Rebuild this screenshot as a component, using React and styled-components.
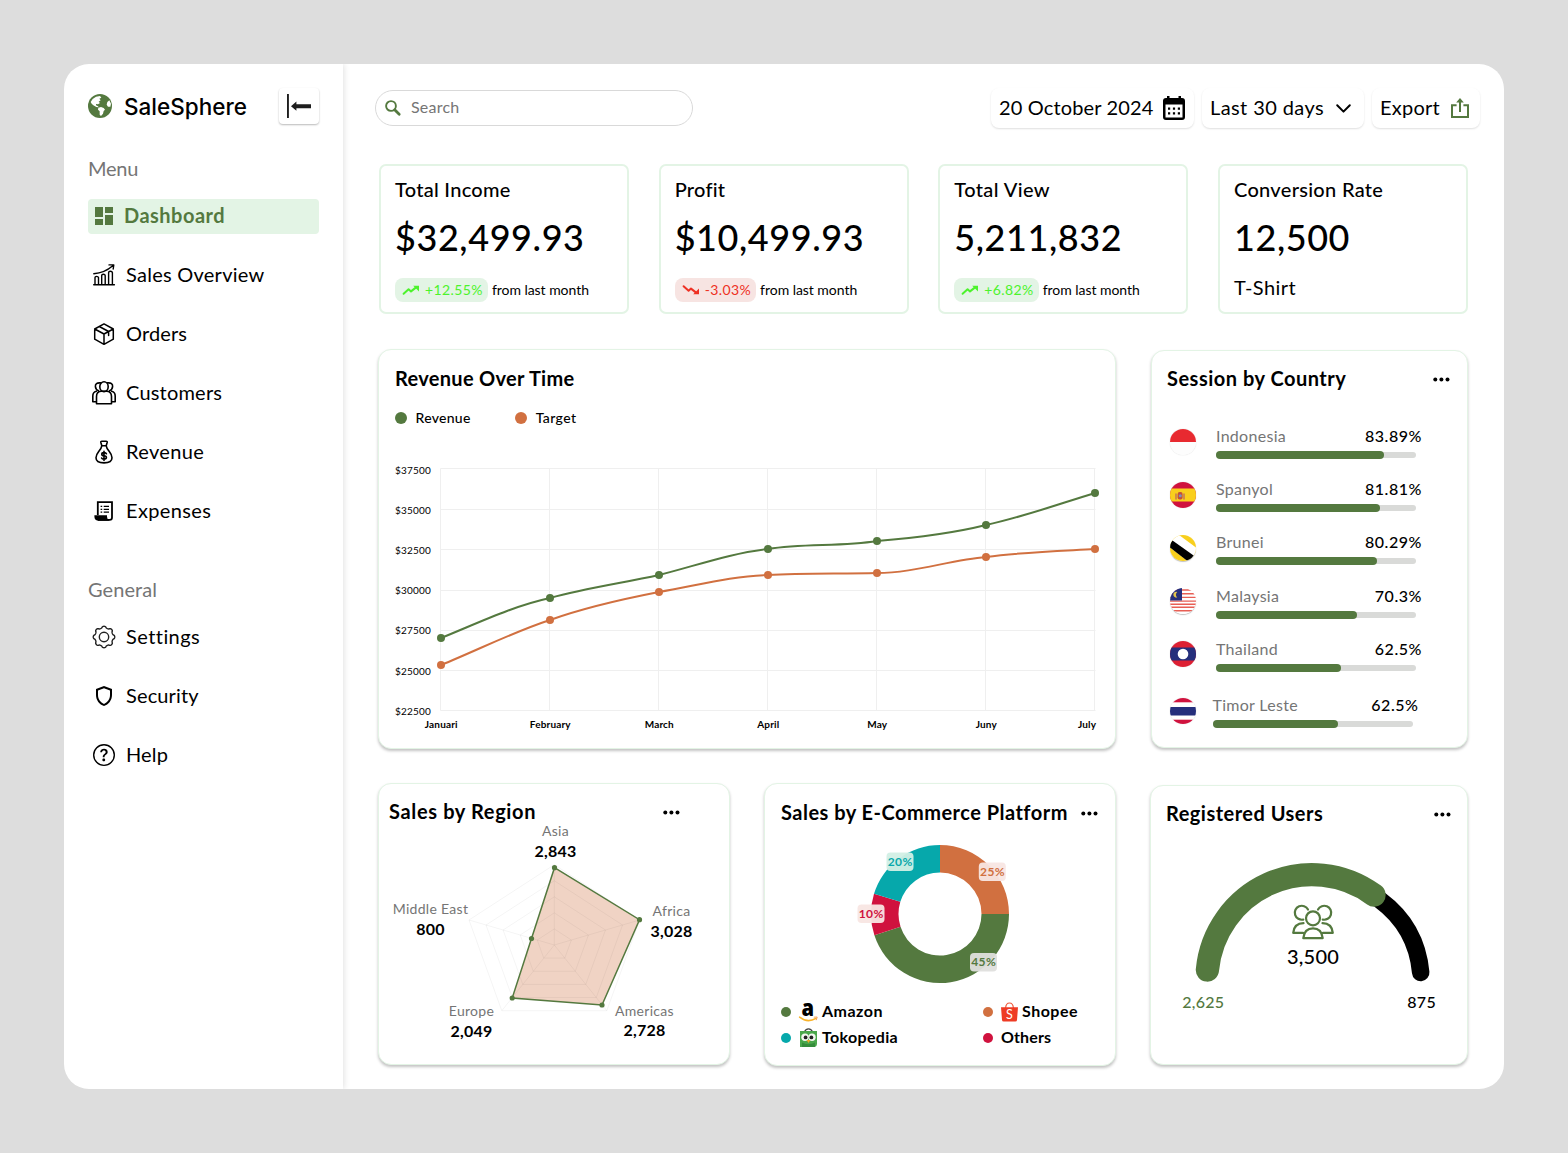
import React from 'react';
import styled, { createGlobalStyle, css } from 'styled-components';
import { BsQuestionCircle } from 'react-icons/bs';
import { MdDashboard, MdOutlineShield } from 'react-icons/md';

const GREEN = '#54793f';
const ORANGE = '#d17040';
const TEAL = '#06a8ab';
const RED = '#d0123e';
const MINT = '#e3f4e5';
const GRAY = '#757575';

const GlobalStyle = createGlobalStyle`
  *, *::before, *::after { box-sizing: border-box; }
  body {
    margin: 0;
    background: #dddddd;
    color: #000;
    font-family: Lato, "Open Sans", sans-serif;
    letter-spacing: 0.015em;
  }
  button { font: inherit; letter-spacing: inherit; color: inherit; border: 0; padding: 0; background: none; }
  svg { display: block; flex: none; overflow: visible; }
  svg text { font-family: Lato, "Open Sans", sans-serif; }
`;

const tracking = css`letter-spacing: ${p => p.$ls ?? 0.015}em;`;

/* ---------- shell ---------- */
const Page = styled.div`
  padding: 64px;
  min-height: 1153px;
`;
const Window = styled.div`
  display: flex;
  width: 1440px;
  height: 1025px;
  border-radius: 25px;
  background: #fff;
  overflow: hidden;
`;
const Sidebar = styled.aside`
  width: 279px;
  padding: 24px 24px 0;
  box-shadow: 1px 0 6px rgba(0, 0, 0, 0.12);
`;
const Brand = styled.div`
  display: flex;
  align-items: center;
  height: 36px;
`;
const BrandName = styled.span`
  flex: 1;
  margin-left: 12px;
  font: 500 22.5px/36px Inter, sans-serif;
  letter-spacing: 0;
  padding-top: 2px;
`;
const Collapse = styled.button`
  width: 40px;
  height: 36px;
  border-radius: 4px;
  display: grid;
  place-items: center;
  box-shadow: 0 1px 2px rgba(0, 0, 0, 0.28);
`;
const NavLabel = styled.div`
  margin-top: ${p => p.$top}px;
  padding-bottom: 2px;
  font-size: 20px;
  line-height: 22px;
  color: ${GRAY};
  ${tracking}
`;
const Nav = styled.nav`
  display: flex;
  flex-direction: column;
  gap: 24px;
  margin-top: ${p => p.$top}px;
`;
const NavItem = styled.a`
  display: flex;
  align-items: center;
  height: 35px;
  padding-left: 4px;
  padding-bottom: ${p => p.$raise}px;
  gap: ${p => (p.$active ? 8 : 10)}px;
  border-radius: 4px;
  font-size: 20px;
  line-height: 33px;
  font-weight: ${p => (p.$active ? 700 : 400)};
  color: ${p => (p.$active ? GREEN : '#000')};
  background: ${p => (p.$active ? MINT : 'transparent')};
  ${tracking}
`;
const NavIcon = styled.span`
  width: 24px;
  height: 24px;
  display: grid;
  place-items: center;
`;
const Label = styled.span`
  padding-bottom: ${p => p.$pb ?? 2}px;
`;

/* ---------- main ---------- */
const Main = styled.main`
  flex: 1;
  padding: 24px 24px 0 32px;
`;
const TopBar = styled.header`
  display: flex;
  align-items: center;
  gap: 8px;
  height: 40px;
`;
const SearchBox = styled.div`
  display: flex;
  align-items: center;
  gap: 10px;
  width: 318px;
  height: 36px;
  margin-right: auto;
  margin-top: -1px;
  padding-left: 9px;
  border: 1px solid #d9d9d9;
  border-radius: 18px;
  font-size: 16px;
  color: ${GRAY};
`;
const Action = styled.button`
  display: flex;
  align-items: center;
  justify-content: space-between;
  width: ${p => p.$w}px;
  height: 40px;
  padding: 0 ${p => p.$pr}px 0 8px;
  border-radius: 8px;
  font-size: 20px;
  box-shadow: 0 1px 2px rgba(0, 0, 0, 0.13);
  ${tracking}
`;
const Stats = styled.section`
  display: flex;
  justify-content: space-between;
  margin: 36px 12px 0 4px;
`;
const StatCard = styled.article`
  width: 250px;
  height: 150px;
  padding: 12px 14px;
  border: 2px solid ${MINT};
  border-radius: 7px;
`;
const StatTitle = styled.h3`
  margin: 0;
  padding-bottom: 2px;
  font-size: 20px;
  font-weight: 500;
  line-height: 22px;
  ${tracking}
`;
const StatValue = styled.div`
  margin-top: 13px;
  font-size: 36px;
  font-weight: 500;
  line-height: 44px;
  letter-spacing: 0.016em;
`;
const StatFoot = styled.div`
  display: flex;
  align-items: center;
  gap: 4px;
  margin-top: 19px;
  height: 24px;
  font-size: 14px;
  letter-spacing: -0.003em;
`;
const Badge = styled.span`
  display: flex;
  align-items: center;
  gap: 6px;
  height: 24px;
  padding: 0 5px 0 8px;
  border-radius: 8px;
  letter-spacing: 0.028em;
  color: ${p => (p.$down ? '#ee3124' : '#4cf32c')};
  background: ${p => (p.$down ? '#f7e4e2' : MINT)};
`;
const StatNote = styled.div`
  margin-top: 16px;
  font-size: 20px;
  line-height: 24px;
  letter-spacing: 0.021em;
`;

const Row = styled.section`
  display: flex;
  align-items: flex-start;
  justify-content: space-between;
  margin: ${p => p.$top}px 12px 0 3px;
`;
const Card = styled.article`
  width: ${p => p.$w}px;
  height: ${p => p.$h}px;
  margin-top: ${p => p.$mt || 0}px;
  padding: ${p => p.$pad};
  border: 1px solid ${MINT};
  border-radius: 13px;
  background: #fff;
  box-shadow: 0 2px 3px rgba(0, 0, 0, 0.24);
`;
const CardHead = styled.div`
  display: flex;
  align-items: center;
  justify-content: space-between;
  height: 24px;
`;
const CardTitle = styled.h2`
  margin: 0;
  padding-bottom: 2px;
  font-size: 20px;
  font-weight: 700;
  line-height: 22px;
  white-space: nowrap;
  ${tracking}
`;
const Legend = styled.div`
  display: flex;
  gap: 44.5px;
  margin: 17px 0 26px;
`;
const LegendItem = styled.div`
  display: flex;
  align-items: center;
  gap: 8.5px;
  font-size: 14px;
  font-weight: 500;
  line-height: 20px;
  ${tracking}
`;
const Dot = styled.span`
  width: ${p => p.$s}px;
  height: ${p => p.$s}px;
  border-radius: 50%;
  background: ${p => p.$c};
`;

/* ---------- session list ---------- */
const Countries = styled.div`
  display: grid;
  grid-auto-rows: 35px;
  row-gap: 18.2px;
  margin-top: 33px;
`;
const Country = styled.div`
  display: flex;
  align-items: center;
  gap: ${p => (p.$last ? 16.5 : 20)}px;
  padding-left: 3px;
  margin-top: ${p => (p.$last ? 7 : 0)}px;
`;
const CountryBody = styled.div`
  width: 206px;
`;
const CountryTop = styled.div`
  display: flex;
  justify-content: space-between;
  font-size: 16px;
  line-height: 21px;
`;
const CountryName = styled.span`
  color: ${GRAY};
  letter-spacing: 0.018em;
`;
const Share = styled.span`
  font-weight: 500;
  letter-spacing: 0.034em;
`;
const Track = styled.div`
  display: flex;
  align-items: center;
  width: 200px;
  height: 6px;
  margin-top: 6px;
  border-radius: 3px;
  background: #d9dad8;
`;
const Fill = styled.div`
  height: 8px;
  border-radius: 4px;
  background: ${GREEN};
`;
const FlagDisc = styled.span`
  display: block;
  width: 26px;
  height: 26px;
  border-radius: 50%;
  overflow: hidden;
  box-shadow: 0 ${p => (p.$raised ? 1 : 0)}px 1px rgba(0, 0, 0, 0.25);
`;

/* ---------- platform legend ---------- */
const Platforms = styled.div`
  display: grid;
  grid-template-columns: 202px auto;
  grid-auto-rows: 26px;
`;
const Platform = styled.div`
  display: flex;
  align-items: center;
  gap: 4px;
  font-size: 16px;
  font-weight: 700;
  ${tracking}
`;
const PlatformDot = styled(Dot)`
  margin-right: 4px;
`;

/* ---------- icons ---------- */
const stroke = { fill: 'none', stroke: 'currentColor', strokeLinecap: 'round', strokeLinejoin: 'round' };

const Globe = () => (
  <svg width="24" height="24" viewBox="0 0 72 72">
    <circle cx="36" cy="36" r="36" fill={GREEN} />
    <path fill="#fff" d="M8 24 14 15 24 8 36 6 40 11 34 14 38 19 32 23 36 27 30 31 24 30 24 34 30 37 32 40 25 39 16 34 11 29ZM31 41 39 39 47 42 51 47 47 51 45 59 39 66 35 62 35 52 30 47ZM58 24 64 19 69 29 67 38 60 38 56 32Z" />
  </svg>
);
const CollapseIcon = () => (
  <svg width="24" height="24" viewBox="0 0 24 24" fill="#1e1e1e">
    <rect x="0" y="0" width="1.9" height="24" />
    <path d="M4 12.2 9.4 7.6V10.2H24V14.2H9.4V16.8Z" />
  </svg>
);
const SalesIcon = () => (
  <svg width="22" height="22" viewBox="0 0 22 22" {...stroke} strokeWidth="1.4">
    <path d="M.7 20.8H21.4M2 20.5V13.5Q2 12.4 3.6 12.4T5.5 13.5V20.5M8.7 20.5V11.5Q8.7 10.2 10.4 10.2T12.2 11.5V20.5M15.6 20.5V8.6Q15.6 7.2 17.4 7.2T19.4 8.6V20.5M.8 9.8Q11.5 9 19.8 1.8M16 .9H20.8L20.2 5" />
  </svg>
);
const BoxIcon = () => (
  <svg width="22" height="22" viewBox="0 0 22 22" {...stroke} strokeWidth="1.5">
    <path d="M11 .9 20.3 6V16.2L11 21.3 1.7 16.2V6ZM1.7 6 11 11 20.3 6M11 11V21.3M6.3 3.5 15.6 8.5V12.5" />
  </svg>
);
const CustomersIcon = () => (
  <svg width="24" height="24" viewBox="0 0 24 24" {...stroke} strokeWidth="1.6">
    <ellipse cx="12" cy="5.7" rx="4.2" ry="4.9" />
    <path d="M4.5 22.8V15.5Q4.5 10.4 9.5 10.3H14.5Q19.5 10.4 19.5 15.5V22.8ZM8.6 1.9Q3 1.3 3.4 5.7 3.8 9 6.5 9.8M4.5 20.8H.8V15Q.8 11.2 4.3 10.3M15.4 1.9Q21 1.3 20.6 5.7 20.2 9 17.5 9.8M19.5 20.8H23.2V15Q23.2 11.2 19.7 10.3" />
  </svg>
);
const BagIcon = () => (
  <svg width="18" height="24" viewBox="0 0 18 24" {...stroke} strokeWidth="1.6">
    <path d="M6.8 5.8 5.8 2.2Q5.6 1.2 6.8 1.2H11.2Q12.4 1.2 12.2 2.2L11.2 5.8ZM6.8 5.8Q6.4 8.4 3.7 11.6 1 15 1 17.8 1 22.9 9 22.9T17 17.8Q17 15 14.3 11.6 11.6 8.4 11.2 5.8M11.4 13.7Q11 12.6 9 12.6 6.8 12.6 6.8 14.2 6.8 15.6 9 15.8 11.4 16 11.4 17.6 11.4 19.2 9 19.2 7 19.2 6.6 18M9 11.2V20.5" />
  </svg>
);
const ReceiptIcon = () => (
  <svg width="20" height="20" viewBox="0 0 20 20" fill="none" stroke="currentColor" strokeWidth="1.6">
    <path d="M3.8 14V1.2H18V16.5Q18 18.9 15.6 18.9H4" strokeWidth="1.8" />
    <path d="M.4 14.2H13V15.8Q13 18.7 15.6 19.7H4Q.4 19.6.4 15.6Z" fill="currentColor" stroke="none" />
    <path d="M6.6 5.4H8.2M9.7 5.4H15M6.6 8.3H8.2M9.7 8.3H15M6.6 11.2H8.2M9.7 11.2H15" strokeWidth="1.3" />
  </svg>
);
const gearPath = (() => {
  const pts = [];
  for (let i = 0; i <= 96; i++) {
    const a = (i / 96) * Math.PI * 2;
    const wave = Math.cos(8 * a);
    const r = 9.9 + 0.85 * Math.sign(wave) * Math.sqrt(Math.abs(wave));
    pts.push(`${(12 + r * Math.sin(a)).toFixed(2)} ${(12 - r * Math.cos(a)).toFixed(2)}`);
  }
  return `M${pts.join('L')}Z`;
})();
const GearIcon = () => (
  <svg width="24" height="24" viewBox="0 0 24 24" {...stroke} stroke="#222" strokeWidth="1.4">
    <path d={gearPath} />
    <circle cx="12" cy="12" r="4.7" />
  </svg>
);
const SearchIcon = () => (
  <svg width="16" height="16" viewBox="0 0 16 16" fill="none" stroke={GREEN} strokeLinecap="round">
    <circle cx="6" cy="6" r="4.9" strokeWidth="1.9" />
    <path d="M9.7 9.8 14.2 14.2" strokeWidth="2.8" />
  </svg>
);
const CalendarIcon = () => (
  <svg width="22" height="24" viewBox="0 0 22 24">
    <path fillRule="evenodd" d="M3 2H4V0H6.5V2H15.5V0H18V2H19Q22 2 22 5V21Q22 24 19 24H3Q0 24 0 21V5Q0 2 3 2ZM2.5 8.5V21.5H19.5V8.5Z" />
    <path d="M5 11.5H7.2V13.7H5ZM9.9 11.5H12.1V13.7H9.9ZM14.8 11.5H17V13.7H14.8ZM5 16.3H7.2V18.5H5ZM9.9 16.3H12.1V18.5H9.9ZM14.8 16.3H17V18.5H14.8Z" />
  </svg>
);
const ChevronIcon = () => (
  <svg width="15" height="9" viewBox="0 0 15 9" {...stroke} strokeWidth="2">
    <path d="M1.2 1.2 7.5 7.6 13.8 1.2" />
  </svg>
);
const ExportIcon = () => (
  <svg width="18" height="20" viewBox="0 0 18 20" fill="none" stroke={GREEN} strokeWidth="2">
    <path d="M5.6 7.2H1V19H17V7.2H12.4M9 14V3" />
    <path d="M9 0 12.8 4.6H5.2Z" fill={GREEN} stroke="none" />
  </svg>
);
const TrendIcon = ({ down }) => (
  <svg width="16" height="10" viewBox="0 0 16 10">
    <g transform={down ? 'matrix(1 0 0 -1 0 10)' : undefined} fill="currentColor">
      <path d="M.6 8.8 5.6 4.3 8 6.4 12.8 2.6" fill="none" stroke="currentColor" strokeWidth="2" strokeLinejoin="round" strokeLinecap="round" />
      <path d="M10.2.7H16V6.4Z" />
    </g>
  </svg>
);
const MoreIcon = () => (
  <svg width="17" height="5" viewBox="0 0 17 5">
    <circle cx="2.3" cy="2.5" r="2" />
    <circle cx="8.4" cy="2.5" r="2" />
    <circle cx="14.5" cy="2.5" r="2" />
  </svg>
);

const AmazonLogo = () => (
  <svg width="19" height="20" viewBox="0 0 19 20">
    <text x="2.6" y="13.8" fontSize="23" fontWeight="800" textLength="13" lengthAdjust="spacingAndGlyphs" style={{ fontFamily: 'Open Sans' }}>a</text>
    <path d="M.6 15.2Q8.5 21.5 17 16.4" fill="none" stroke="#f9b32b" strokeWidth="1.6" strokeLinecap="round" />
    <path d="M14.8 15.2 18.2 15 17.2 18.2" fill="none" stroke="#f5a55c" strokeWidth="1" />
  </svg>
);
const ShopeeLogo = () => (
  <svg width="17" height="20" viewBox="0 0 17 20">
    <path d="M4.6 6Q5 1 8.5 1T12.4 6" fill="none" stroke="#ef5a3c" strokeWidth="1.2" />
    <path d="M0 5.2H17L16 18Q15.9 19.6 14.3 19.6H2.7Q1.1 19.6 1 18Z" fill="#ee3b24" />
    <text x="8.6" y="16.9" fontSize="12.5" fontWeight="400" textAnchor="middle" fill="#fff">S</text>
  </svg>
);
const TokopediaLogo = () => (
  <svg width="19" height="20" viewBox="-1 0 19 20">
    <path d="M4.5 4Q5.5 .8 8.5 .8T12.5 4" fill="none" stroke="#444" strokeWidth="1.2" />
    <path d="M0 3H17V15.5Q17 19 13.5 19H0Z" fill="#4aa74b" />
    <path d="M2 14.500Q8 18 15 14.5V19H2Z" fill="#358c3b" />
    <circle cx="5" cy="9.2" r="3.7" fill="#f3f6f0" />
    <circle cx="12" cy="9.2" r="3.7" fill="#f3f6f0" />
    <circle cx="5.6" cy="9.4" r="1.9" fill="#222" />
    <circle cx="11.4" cy="9.4" r="1.9" fill="#222" />
    <path d="M6.6 12H10.4L8.5 15Z" fill="#f4a829" />
  </svg>
);
const UsersIcon = () => (
  <>
    <circle cx="1313" cy="918.3" r="7" />
    <path d="M1303.3 938.2Q1304.3 928.4 1313 928.4T1322.7 938.2ZM1303.3 919.6A7 7 0 1 1 1308 909.5M1322.7 919.6A7 7 0 1 0 1318 909.5M1303.5 923.2Q1294.2 923.4 1293.2 932.8H1303M1322.5 923.2Q1331.8 923.4 1332.8 932.8H1323" />
  </>
);

/* ---------- flags ---------- */
const flags = {
  indonesia: <><rect width="26" height="26" fill="#fdfdfd" /><rect width="26" height="13" fill="#e82a30" /></>,
  spain: (
    <>
      <rect width="26" height="26" fill={RED} />
      <rect y="6.5" width="26" height="13" fill="#f9cf1c" />
      <path d="M5.2 11.5H6.8V17.5H5.2ZM13.2 11.5H14.8V17.5H13.2Z" fill="#c97b52" />
      <rect x="7.6" y="10" width="5" height="7.5" rx="2" fill="#c2513b" />
      <circle cx="10.3" cy="13.7" r="1.5" fill="#7d91b8" />
    </>
  ),
  brunei: (
    <>
      <rect width="26" height="26" fill="#f8cf1d" />
      <path d="M0 0H9L28 14V20L24 27H19L-2 11Z" fill="#fff" />
      <path d="M2.5 5.5 25 21.5 20 28-2 11Z" fill="#000" />
    </>
  ),
  malaysia: (
    <>
      <rect width="26" height="26" fill="#fff" />
      <path d="M0 2H26M0 5.7H26M0 9.4H26M0 13.100H26M0 16.2H26M0 19.3H26M0 22.7H26" stroke="#e85f55" strokeWidth="1.4" />
      <rect width="12" height="12.5" fill="#252f7c" />
      <path d="M7.3 4A2.9 2.9 0 1 0 7.3 9.4 3.3 3.3 0 0 1 7.3 4Z" fill="#e3c44b" />
    </>
  ),
  thailand: (
    <>
      <rect width="26" height="26" fill="#dd2033" />
      <rect y="6.5" width="26" height="13" fill="#252f7c" />
      <circle cx="13" cy="13" r="5.3" fill="#fff" />
    </>
  ),
  timor: (
    <>
      <rect width="26" height="26" fill="#fff" />
      <rect width="26" height="4.3" fill={RED} />
      <rect y="9" width="26" height="8.5" fill="#252f7c" />
      <rect y="21.7" width="26" height="4.3" fill={RED} />
    </>
  ),
};

/* ---------- data ---------- */
const menu = [
  ['Dashboard', <MdDashboard size={24} />, 0.024],
  ['Sales Overview', <SalesIcon />, 0.013],
  ['Orders', <BoxIcon />, 0.006],
  ['Customers', <CustomersIcon />, 0.01],
  ['Revenue', <BagIcon />, 0.018],
  ['Expenses', <ReceiptIcon />, 0.018],
];
const general = [
  ['Settings', <GearIcon />, 0.022],
  ['Security', <MdOutlineShield size={24} />, 0.007],
  ['Help', <BsQuestionCircle size={22} />, 0.008],
];
const stats = [
  { title: 'Total Income', value: '$32,499.93', change: '+12.55%', ls: 0.014 },
  { title: 'Profit', value: '$10,499.93', change: '-3.03%', down: true, ls: 0.012 },
  { title: 'Total View', value: '5,211,832', change: '+6.82%', ls: 0.02 },
  { title: 'Conversion Rate', value: '12,500', note: 'T-Shirt', ls: 0.015 },
];
const countries = [
  ['indonesia', 'Indonesia', 83.89],
  ['spain', 'Spanyol', 81.81],
  ['brunei', 'Brunei', 80.29, true],
  ['malaysia', 'Malaysia', 70.3, true],
  ['thailand', 'Thailand', 62.5],
  ['timor', 'Timor Leste', 62.5],
];

/* ---------- charts ---------- */
const months = ['Januari', 'February', 'March', 'April', 'May', 'Juny', 'July'];
const xs = [441, 550, 659, 768, 877, 986, 1095];
const yTicks = [
  [468.5, '$37500'], [509.5, '$35000'], [549.5, '$32500'], [590.5, '$30000'],
  [630.5, '$27500'], [670.5, '$25000'], [710.5, '$22500'],
];
const revenue = [638, 598, 575, 549, 541, 525, 493];
const target = [665, 620, 592, 575, 573, 557, 549];
const revenuePath = 'M441 638C478 623 513 606 550 598C586 588 623 583 659 575C695 566 731 553 768 549C804 543 841 547 877 541C914 538 950 534 986 525C1023 517 1059 504 1095 493';
const targetPath = 'M441 665C478 650 513 632 550 620C586 607 623 599 659 592C695 586 731 576 768 575C804 573 841 574 877 573C914 573 950 560 986 557C1023 552 1059 551 1095 549';

const LineChart = () => (
  <svg width="704" height="280" viewBox="395 454 704 280">
    <g stroke="#efefef">
      {yTicks.map(([y]) => <line key={y} x1="440.5" x2="1095.5" y1={y} y2={y} />)}
      {xs.map(x => <line key={x} x1={x - 0.5} x2={x - 0.5} y1="468.5" y2="710.5" />)}
    </g>
    <g fontSize="10" letterSpacing="0.2">
      {yTicks.map(([y, t], i) => <text key={t} x="395" y={474 + i * 40.1}>{t}</text>)}
    </g>
    <g fontSize="10" fontWeight="700" textAnchor="middle" letterSpacing="0.15">
      {months.map((m, i) => <text key={m} x={i === 6 ? 1087 : xs[i] + 0.3} y="728">{m}</text>)}
    </g>
    <g fill="none" strokeWidth="2">
      <path d={revenuePath} stroke={GREEN} />
      <path d={targetPath} stroke={ORANGE} />
    </g>
    {xs.map((x, i) => (
      <g key={x}>
        <circle cx={x} cy={revenue[i]} r="4" fill={GREEN} />
        <circle cx={x} cy={target[i]} r="4" fill={ORANGE} />
      </g>
    ))}
  </svg>
);

const axes = [[0, -80.3], [85.3, -25], [52.5, 65.7], [-52.5, 65.7], [-85.3, -25]];
const ring = k => axes.map(([x, y]) => `${554.3 + x * k},${945 + y * k}`).join(' ');
const regionPoints = [[554.5, 867.7], [639.5, 919.7], [602, 1005], [512.2, 998], [531.5, 938.5]];
const regions = [
  ['Asia', '2,843', 555.5, 836], ['Africa', '3,028', 671.5, 916], ['Americas', '2,728', 644.5, 1015.5],
  ['Europe', '2,049', 471.5, 1016], ['Middle East', '800', 430.5, 914],
];
const Radar = () => (
  <svg width="330" height="220" viewBox="389 824 330 220">
    <polygon points={regionPoints.join(' ')} fill="#f0d3c4" />
    <g fill="none" stroke="#000" strokeOpacity="0.045">
      {[0.2, 0.4, 0.6, 0.8, 1].map(k => <polygon key={k} points={ring(k)} />)}
      {axes.map(([x, y]) => <line key={`${x} ${y}`} x1="554.3" y1="945" x2={554.3 + x} y2={945 + y} />)}
    </g>
    <polygon points={regionPoints.join(' ')} fill="none" stroke={GREEN} strokeWidth="1.5" />
    {regionPoints.map(([x, y]) => <circle key={x} cx={x} cy={y} r="2.6" fill={GREEN} />)}
    {regions.map(([name, value, x, y]) => (
      <g key={name} textAnchor="middle">
        <text x={x} y={y} fontSize="14" fill={GRAY} letterSpacing="0.3">{name}</text>
        <text x={x} y={y + 20.5} fontSize="16" fontWeight="700" letterSpacing="0.25">{value}</text>
      </g>
    ))}
  </svg>
);

const polar = (r, deg) => {
  const a = (deg * Math.PI) / 180;
  return `${(940 + r * Math.sin(a)).toFixed(2)} ${(914 - r * Math.cos(a)).toFixed(2)}`;
};
const slices = [[0, 90, ORANGE], [90, 252, GREEN], [252, 287, RED], [287, 360, TEAL]];
const tags = [
  ['25%', 992.3, 872, ORANGE, '#f8e6e3'], ['45%', 983.5, 962.5, GREEN, '#dfdfdd'],
  ['10%', 871, 914, RED, '#f8e6e3'], ['20%', 900, 862, TEAL, '#d2efe5'],
];
const Donut = () => (
  <svg width="170" height="142" viewBox="855 843 170 142">
    {slices.map(([from, to, color]) => (
      <path key={color} fill={color} d={`M${polar(69, from)}A69 69 0 0 1 ${polar(69, to)}L${polar(41.5, to)}A41.5 41.5 0 0 0 ${polar(41.5, from)}Z`} />
    ))}
    {tags.map(([t, x, y, color, bg]) => (
      <g key={t}>
        <rect x={x - 13.5} y={y - 9.5} width="27" height="18.5" rx="4" fill={bg} fillOpacity="0.95" />
        <text x={x + 0.3} y={y + 3.9} fontSize="12" fontWeight="700" textAnchor="middle" letterSpacing="0.5" fill={color}>{t}</text>
      </g>
    ))}
  </svg>
);

const Gauge = () => (
  <svg width="270" height="160" viewBox="1176 855 270 160">
    <path d="M1380 900Q1416.5 927 1420.7 972.5" fill="none" stroke="#000" strokeWidth="17.5" strokeLinecap="round" />
    <path d="M1207.4 970A105 105 0 0 1 1374 895" fill="none" stroke={GREEN} strokeWidth="23.3" strokeLinecap="round" />
    <g fill="none" stroke={GREEN} strokeWidth="2.2" strokeLinecap="round" strokeLinejoin="round"><UsersIcon /></g>
    <g textAnchor="middle" fontWeight="500">
      <text x="1313" y="963.5" fontSize="20" letterSpacing="0.2">3,500</text>
      <text x="1203.3" y="1008" fontSize="16" letterSpacing="0.3" fill={GREEN}>2,625</text>
      <text x="1421.7" y="1008" fontSize="16" letterSpacing="0.4">875</text>
    </g>
  </svg>
);

const ChartSlot = styled.div`
  margin-top: ${p => p.$mt || 0}px;
  margin-left: ${p => p.$ml || 0}px;
`;

/* ---------- page ---------- */
const NavList = ({ items, top, raise }) => (
  <Nav $top={top}>
    {items.map(([name, icon, ls]) => (
      <NavItem key={name} $active={name === 'Dashboard'} $raise={raise} $ls={ls}><NavIcon>{icon}</NavIcon>{name}</NavItem>
    ))}
  </Nav>
);

export default function App() {
  return (
    <Page>
      <GlobalStyle />
      <Window>
        <Sidebar>
          <Brand>
            <Globe />
            <BrandName>SaleSphere</BrandName>
            <Collapse><CollapseIcon /></Collapse>
          </Brand>
          <NavLabel $top={33} $ls={-0.014}>Menu</NavLabel>
          <NavList items={menu} top={18} raise={2} />
          <NavLabel $top={49} $ls={0.003}>General</NavLabel>
          <NavList items={general} top={17} raise={0} />
        </Sidebar>
        <Main>
          <TopBar>
            <SearchBox><SearchIcon /><Label>Search</Label></SearchBox>
            <Action $w={203} $pr={9} $ls={0.007}><Label>20 October 2024</Label><CalendarIcon /></Action>
            <Action $w={162} $pr={13} $ls={0.02}><Label>Last 30 days</Label><ChevronIcon /></Action>
            <Action $w={108} $pr={11} $ls={0.012}><Label>Export</Label><ExportIcon /></Action>
          </TopBar>
          <Stats>
            {stats.map(s => (
              <StatCard key={s.title}>
                <StatTitle $ls={s.ls}>{s.title}</StatTitle>
                <StatValue>{s.value}</StatValue>
                {s.note ? <StatNote>{s.note}</StatNote> : (
                  <StatFoot>
                    <Badge $down={s.down}><TrendIcon down={s.down} /><Label>{s.change}</Label></Badge>
                    <Label>from last month</Label>
                  </StatFoot>
                )}
              </StatCard>
            ))}
          </Stats>
          <Row $top={35}>
            <Card $w={738} $h={400} $pad="17px 16px 0">
              <CardHead><CardTitle $ls={0.015}>Revenue Over Time</CardTitle></CardHead>
              <Legend>
                <LegendItem $ls={0.02}><Dot $s={12} $c={GREEN} />Revenue</LegendItem>
                <LegendItem $ls={0.03}><Dot $s={12} $c={ORANGE} />Target</LegendItem>
              </Legend>
              <LineChart />
            </Card>
            <Card $w={317} $h={398} $mt={1} $pad="16px 17px 0 15px">
              <CardHead><CardTitle $ls={0.025}>Session by Country</CardTitle><MoreIcon /></CardHead>
              <Countries>
                {countries.map(([flag, name, share, raised]) => (
                  <Country key={name} $last={flag === 'timor'}>
                    <FlagDisc $raised={raised}><svg width="26" height="26">{flags[flag]}</svg></FlagDisc>
                    <CountryBody>
                      <CountryTop><CountryName>{name}</CountryName><Share>{share}%</Share></CountryTop>
                      <Track><Fill style={{ width: `${share}%` }} /></Track>
                    </CountryBody>
                  </Country>
                ))}
              </Countries>
            </Card>
          </Row>
          <Row $top={34}>
            <Card $w={352} $h={282} $pad="16px 49px 0 10px">
              <CardHead><CardTitle $ls={0.032}>Sales by Region</CardTitle><MoreIcon /></CardHead>
              <Radar />
            </Card>
            <Card $w={352} $h={283} $pad="17px 17px 0 16px">
              <CardHead><CardTitle $ls={0.024}>Sales by E-Commerce Platform</CardTitle><MoreIcon /></CardHead>
              <ChartSlot $mt={18} $ml={74}><Donut /></ChartSlot>
              <ChartSlot $mt={14}>
                <Platforms>
                  <Platform $ls={0.03}><PlatformDot $s={10} $c={GREEN} /><AmazonLogo /><Label $pb={3}>Amazon</Label></Platform>
                  <Platform $ls={0.03}><PlatformDot $s={10} $c={ORANGE} /><ShopeeLogo /><Label $pb={3}>Shopee</Label></Platform>
                  <Platform $ls={0.02}><PlatformDot $s={10} $c={TEAL} /><TokopediaLogo /><Label $pb={3}>Tokopedia</Label></Platform>
                  <Platform $ls={0.008}><PlatformDot $s={10} $c={RED} /><Label $pb={3}>Others</Label></Platform>
                </Platforms>
              </ChartSlot>
            </Card>
            <Card $w={318} $h={280} $mt={2} $pad="16px 16px 0 15px">
              <CardHead><CardTitle $ls={0.024}>Registered Users</CardTitle><MoreIcon /></CardHead>
              <ChartSlot $mt={29} $ml={10}><Gauge /></ChartSlot>
            </Card>
          </Row>
        </Main>
      </Window>
    </Page>
  );
}
